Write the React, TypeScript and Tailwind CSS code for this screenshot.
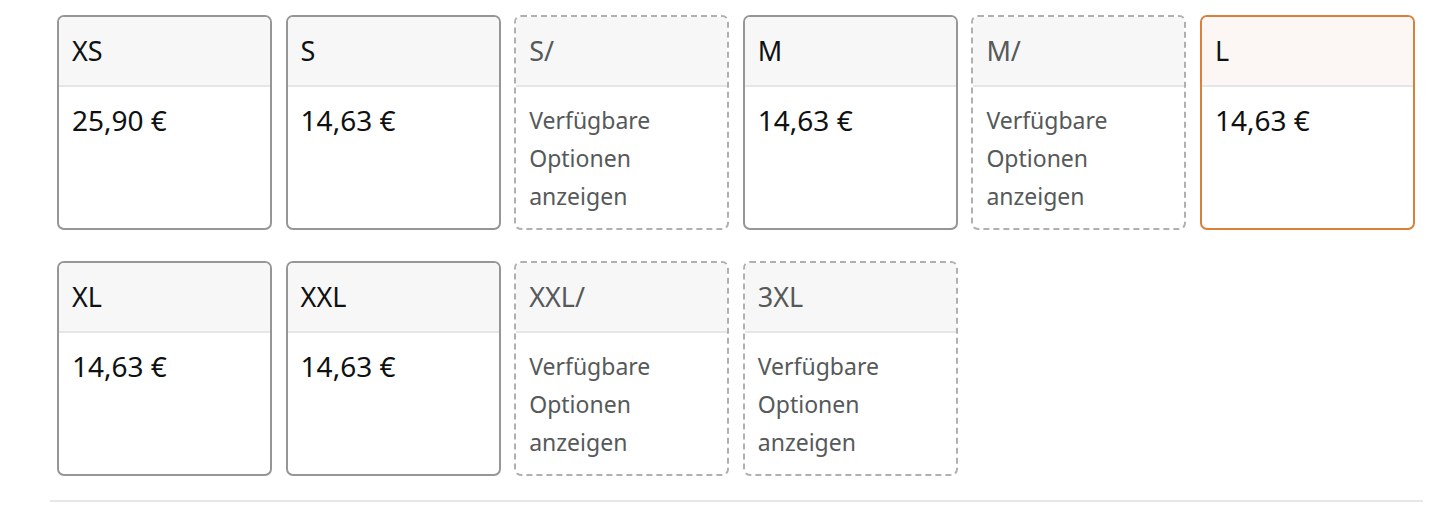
type SizeOption = {
  label: string;
  price?: string;
  selected?: boolean;
};

const rowOne: SizeOption[] = [
  { label: 'XS', price: '25,90 €' },
  { label: 'S', price: '14,63 €' },
  { label: 'S/' },
  { label: 'M', price: '14,63 €' },
  { label: 'M/' },
  { label: 'L', price: '14,63 €', selected: true },
];

const rowTwo: SizeOption[] = [
  { label: 'XL', price: '14,63 €' },
  { label: 'XXL', price: '14,63 €' },
  { label: 'XXL/' },
  { label: '3XL' },
];

const SizeCard = ({ option }: { option: SizeOption }) => {
  const unavailable = !option.price;

  let frame = 'border-2 border-solid border-[#959797]';
  if (unavailable) frame = 'border-2 border-dashed border-[#b0b0b0]';
  if (option.selected) frame = 'border-2 border-solid border-[#d9803a]';

  return (
    <button
      className={`flex flex-col w-[215px] h-[215px] rounded-[7px] overflow-hidden bg-white text-left ${frame}`}
    >
      <div
        className={`h-[70px] shrink-0 flex items-center px-[13px] border-b-2 border-[#e6e6e6] text-[27px] ${
          option.selected ? 'bg-[#fcf7f5]' : 'bg-[#f7f7f7]'
        } ${unavailable ? 'text-[#565959]' : 'text-[#0f1111]'}`}
      >
        {option.label}
      </div>
      {unavailable ? (
        <p className="px-[13px] pt-[14px] text-[23px] leading-[38px] text-[#565959]">
          Verfügbare
          <br />
          Optionen
          <br />
          anzeigen
        </p>
      ) : (
        <p className="px-[13px] pt-[16px] text-[28px] leading-[34px] text-[#0f1111]">
          {option.price}
        </p>
      )}
    </button>
  );
};

const App = () => {
  return (
    <div className="w-[1432px] h-[506px] bg-white font-['Noto_Sans','Liberation_Sans',sans-serif]">
      <div className="pl-[57px] pt-[15px] flex flex-col gap-[31px]">
        <div className="flex gap-[13.6px]">
          {rowOne.map((option, index) => (
            <SizeCard option={option} key={index} />
          ))}
        </div>
        <div className="flex gap-[13.6px]">
          {rowTwo.map((option, index) => (
            <SizeCard option={option} key={index} />
          ))}
        </div>
      </div>
      <div className="ml-[50px] mr-[9px] mt-[24px] border-t-2 border-[#e7e7e7]" />
    </div>
  );
};

export default App;
